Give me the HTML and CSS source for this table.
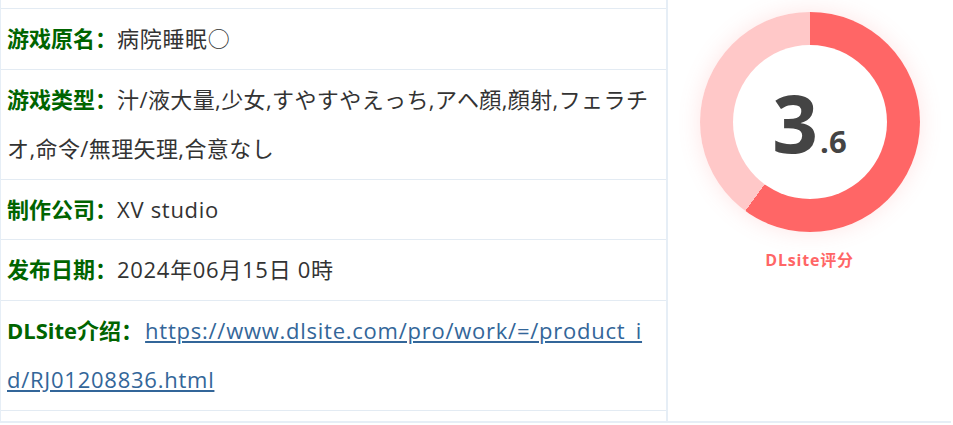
FILE: index.html
```html
<!DOCTYPE html>
<html lang="zh">
<head>
<meta charset="utf-8">
<link rel="stylesheet" href="styles.css">
</head>
<body>
<div class="wrap">
  <ul class="info">
    <li class="row"><span class="label">游戏原名：</span><span class="val">病院睡眠○</span></li>
    <li class="row"><span class="label">游戏类型：</span><span class="val tight">汁/液大量,少女,すやすやえっち,アヘ顔,顔射,フェラチオ,命令/無理矢理,合意なし</span></li>
    <li class="row"><span class="label">制作公司：</span><span class="val">XV studio</span></li>
    <li class="row"><span class="label">发布日期：</span><span class="val">2024年06月15日 0時</span></li>
    <li class="row"><span class="label">DLSite介绍：</span><a class="link" href="#">https://www.dlsite.com/pro/work/=/product_id/RJ01208836.html</a></li>
  </ul>
  <div class="score">
    <div class="donut">
      <div class="hole"><span class="big">3</span><span class="small">.6</span></div>
    </div>
    <div class="caption">DLsite评分</div>
  </div>
</div>
</body>
</html>
```
FILE: styles.css
```css
html, body {
  margin: 0;
  padding: 0;
  background: #fff;
}
body {
  font-family: "Open Sans", "Noto Sans CJK SC", sans-serif;
  color: #333;
}
.wrap {
  display: flex;
  width: 951px;
  border-bottom: 2px solid #e6eef6;
}
.info {
  list-style: none;
  margin: 0;
  padding: 8px 0 10px;
  width: 668px;
  flex: none;
  border-left: 1px solid #e6eef6;
  border-right: 2px solid #e6eef6;
  box-sizing: border-box;
}
.row {
  border-top: 1px solid #e3ebf3;
  padding: 5px 16px 5px 6px;
  font-size: 22px;
  letter-spacing: 0.7px;
  line-height: 49.5px;
  word-break: break-all;
}
.row:last-child {
  border-bottom: 1px solid #e3ebf3;
}
.label {
  font-weight: bold;
  color: #006400;
  letter-spacing: 0;
}
.val {
  color: #333;
}
.tight {
  letter-spacing: 0.4px;
}
.link {
  color: #336699;
  letter-spacing: 0.75px;
  margin-left: 2px;
  text-decoration: underline;
}
.score {
  flex: 1;
  display: flex;
  flex-direction: column;
  align-items: center;
  padding-top: 12px;
}
.donut {
  width: 220px;
  height: 220px;
  border-radius: 50%;
  background: conic-gradient(#ff6666 0deg 216deg, #ffc8c8 216deg 360deg);
  box-shadow: 0 0 22px rgba(255, 110, 110, 0.18);
  display: flex;
  align-items: center;
  justify-content: center;
}
.hole {
  width: 154px;
  height: 154px;
  border-radius: 50%;
  background: #fff;
  display: flex;
  align-items: baseline;
  justify-content: center;
  line-height: 154px;
  color: #444;
  font-weight: bold;
}
.big {
  font-size: 80px;
  margin-right: 2px;
}
.small {
  font-size: 31px;
}
.caption {
  margin-top: 15px;
  font-size: 16px;
  letter-spacing: 0.8px;
  font-weight: bold;
  color: #ff6666;
}
```
